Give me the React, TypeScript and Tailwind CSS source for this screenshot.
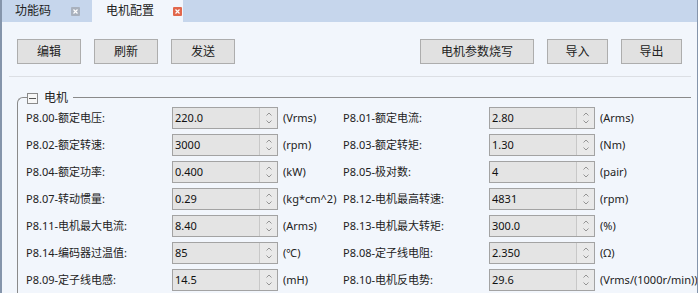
import React from 'react';

type Param = { label: string; value: string; unit: string };

const leftParams: Param[] = [
    { label: 'P8.00-额定电压:', value: '220.0', unit: '(Vrms)' },
    { label: 'P8.02-额定转速:', value: '3000', unit: '(rpm)' },
    { label: 'P8.04-额定功率:', value: '0.400', unit: '(kW)' },
    { label: 'P8.07-转动惯量:', value: '0.29', unit: '(kg*cm^2)' },
    { label: 'P8.11-电机最大电流:', value: '8.40', unit: '(Arms)' },
    { label: 'P8.14-编码器过温值:', value: '85', unit: '(℃)' },
    { label: 'P8.09-定子线电感:', value: '14.5', unit: '(mH)' },
];

const rightParams: Param[] = [
    { label: 'P8.01-额定电流:', value: '2.80', unit: '(Arms)' },
    { label: 'P8.03-额定转矩:', value: '1.30', unit: '(Nm)' },
    { label: 'P8.05-极对数:', value: '4', unit: '(pair)' },
    { label: 'P8.12-电机最高转速:', value: '4831', unit: '(rpm)' },
    { label: 'P8.13-电机最大转矩:', value: '300.0', unit: '(%)' },
    { label: 'P8.08-定子线电阻:', value: '2.350', unit: '(Ω)' },
    { label: 'P8.10-电机反电势:', value: '29.6', unit: '(Vrms/(1000r/min))' },
];

function CloseIcon({ active }: { active?: boolean }) {
    return (
        <span
            className={`flex h-[9px] w-[9px] items-center justify-center rounded-[1px] ${
                active ? 'bg-[#e2674c]' : 'bg-[#a9b1bd]'
            }`}
        >
            <svg width="5" height="5" viewBox="0 0 5 5">
                <path d="M0.5 0.5L4.5 4.5M4.5 0.5L0.5 4.5" stroke="#fff" strokeWidth="1.2" />
            </svg>
        </span>
    );
}

function Button({ children, width }: { children: React.ReactNode; width: string }) {
    return (
        <button
            className={`${width} h-[25px] border border-[#adadad] bg-[#e1e1e1] text-[12px] text-[#222]`}
        >
            {children}
        </button>
    );
}

function SpinBox({ value }: { value: string }) {
    return (
        <div className="flex h-[22px] w-[106px] border border-[#a3a3a3] bg-[#e4e4e4]">
            <div className="flex flex-1 items-center pl-[2px] text-[11px] text-[#111]">{value}</div>
            <div className="flex w-[18px] flex-col items-center justify-center gap-[4px] border-l border-[#c8c8c8] bg-[#e9e9e9]">
                <svg width="6" height="4" viewBox="0 0 6 4">
                    <path d="M0.5 3.5L3 1L5.5 3.5" fill="none" stroke="#8a8a8a" strokeWidth="0.9" />
                </svg>
                <svg width="6" height="4" viewBox="0 0 6 4">
                    <path d="M0.5 0.5L3 3L5.5 0.5" fill="none" stroke="#8a8a8a" strokeWidth="0.9" />
                </svg>
            </div>
        </div>
    );
}

function ParamRow({ p }: { p: Param }) {
    return (
        <div className="flex h-[22px] items-center">
            <div className="w-[146px] whitespace-nowrap text-[11px] text-[#222]">{p.label}</div>
            <SpinBox value={p.value} />
            <div className="ml-[5px] w-[60px] whitespace-nowrap text-[11px] text-[#222]">{p.unit}</div>
        </div>
    );
}

export default function App() {
    return (
        <div
            className="flex h-[293px] w-[698px] flex-col overflow-hidden border-r border-l-2 border-[#8595ab] bg-[#f2f6fc]"
            style={{ fontFamily: '"Noto Sans", "Noto Sans CJK SC", sans-serif' }}
        >
            {/* tab strip */}
            <div className="flex h-[22px] shrink-0 bg-[#c6d6ec] text-[12px] text-[#222]">
                <div className="flex items-center pl-[13px] pr-[6px]">
                    <span>功能码</span>
                    <span className="ml-[20px]">
                        <CloseIcon />
                    </span>
                </div>
                <div className="ml-[6px] flex w-[91px] items-center bg-[#f2f6fc] pl-[14px]">
                    <span>电机配置</span>
                    <span className="ml-[19px]">
                        <CloseIcon active />
                    </span>
                </div>
            </div>

            {/* toolbar */}
            <div className="flex pl-[15px] pr-[15px] pt-[17px]">
                <div className="flex gap-[13px]">
                    <Button width="w-[64px]">编辑</Button>
                    <Button width="w-[64px]">刷新</Button>
                    <Button width="w-[64px]">发送</Button>
                </div>
                <div className="ml-auto flex gap-[13px]">
                    <Button width="w-[114px]">电机参数烧写</Button>
                    <Button width="w-[61px]">导入</Button>
                    <Button width="w-[61px]">导出</Button>
                </div>
            </div>

            <div className="ml-[7px] mt-[12px] h-px w-[682px] bg-[#dcdfe4]" />

            {/* group box */}
            <div className="relative ml-[15px] mt-[20px] w-[674px] flex-1 rounded-tl-[6px] border-l border-t border-[#8a8a8a] pl-[8px] pt-[9px]">
                <div className="absolute -top-[7px] left-[9px] flex items-center gap-[6px] bg-[#f2f6fc] pr-[5px] text-[12px] text-[#222]">
                    <span className="flex h-[11px] w-[11px] items-center justify-center border border-[#8a8a8a] bg-[#f7f7f7]">
                        <span className="h-px w-[7px] bg-[#555]" />
                    </span>
                    <span className="leading-[14px]">电机</span>
                </div>
                <div className="grid grid-cols-[317px_1fr] gap-y-[5px]">
                    {leftParams.map((p, i) => (
                        <React.Fragment key={p.label}>
                            <ParamRow p={p} />
                            <ParamRow p={rightParams[i]} />
                        </React.Fragment>
                    ))}
                </div>
            </div>
        </div>
    );
}
